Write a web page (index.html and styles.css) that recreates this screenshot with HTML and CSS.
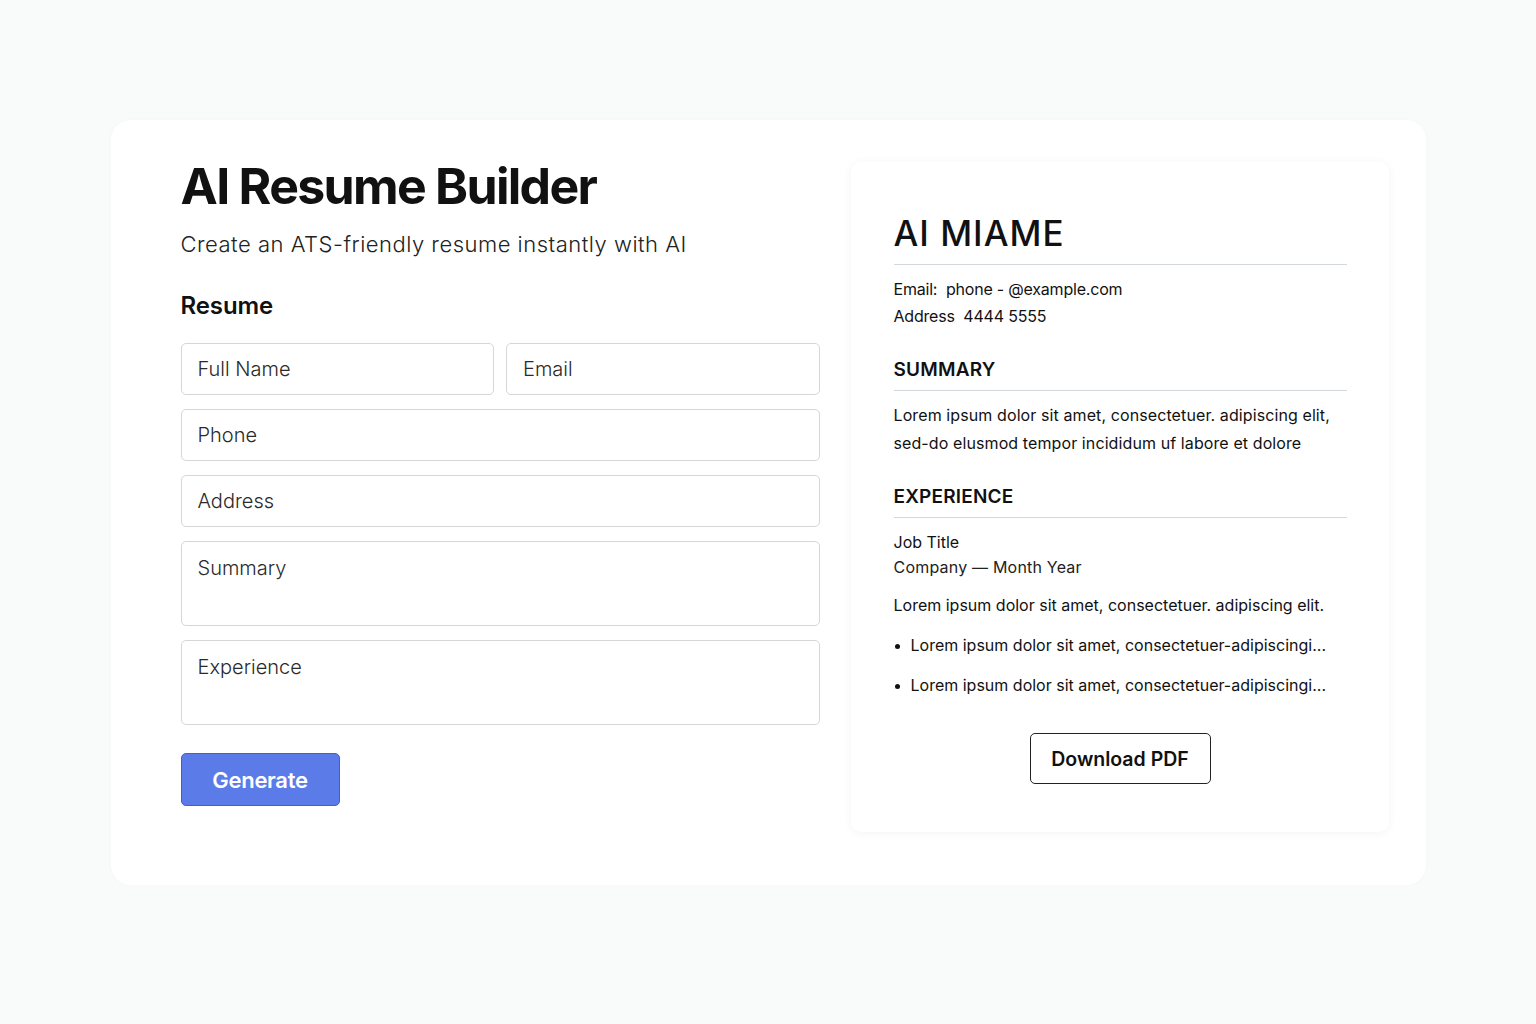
FILE: index.html
```html
<!DOCTYPE html>
<html lang="en">
<head>
    <meta charset="UTF-8">
    <meta name="viewport" content="width=device-width, initial-scale=1.0">
    <title>AI Resume Builder</title>
    <link rel="stylesheet" href="styles.css">
</head>
<body>
    <div class="container">
        <div class="builder">
            <h1>AI Resume Builder</h1>
            <p class="subtitle">Create an ATS-friendly resume instantly with AI</p>
            <h2>Resume</h2>
            <form class="form" onsubmit="return false">
                <div class="row">
                    <input type="text" placeholder="Full Name">
                    <input type="text" placeholder="Email">
                </div>
                <input type="text" placeholder="Phone">
                <input type="text" placeholder="Address">
                <textarea placeholder="Summary"></textarea>
                <textarea placeholder="Experience"></textarea>
            </form>
            <button class="btn">Generate</button>
        </div>

        <div class="preview">
            <h2 class="name">AI MIAME</h2>
            <div class="contact">
                <div>Email:&nbsp; phone - @example.com</div>
                <div>Address&nbsp; 4444 5555</div>
            </div>

            <h3>SUMMARY</h3>
            <p class="summary">Lorem ipsum dolor sit amet, consectetuer. adipiscing elit, sed-do elusmod tempor incididum uf labore et dolore</p>

            <h3>EXPERIENCE</h3>
            <div class="job">
                <div class="job-title">Job Title</div>
                <div class="company">Company — Month Year</div>
            </div>
            <p class="job-text">Lorem ipsum dolor sit amet, consectetuer. adipiscing elit.</p>
            <ul class="bullets">
                <li>Lorem ipsum dolor sit amet, consectetuer-adipiscingi...</li>
                <li>Lorem ipsum dolor sit amet, consectetuer-adipiscingi...</li>
            </ul>

            <div class="download">
                <button class="pdf-btn">Download PDF</button>
            </div>
        </div>
    </div>
</body>
</html>
```

FILE: styles.css
```css
body {
    margin: 0;
    background-color: #f9fafa;
    color: #111;
    font-family: 'Inter', 'Liberation Sans', sans-serif;
}
.container {
    width: 1315px;
    box-sizing: border-box;
    margin: 120px auto 0;
    padding: 36px 37px 53px 70px;
    background-color: #fff;
    border-radius: 20px;
    box-shadow: 0 0 6px rgba(0, 0, 0, 0.02);
    display: grid;
    grid-template-columns: 639px 538px;
    column-gap: 31px;
    align-items: start;
}

/* 左側：入力フォーム */
h1 {
    margin: 0;
    font-size: 50px;
    line-height: 60px;
    font-weight: 700;
    letter-spacing: -1.7px;
    color: #111;
}
.subtitle {
    margin: 13px 0 0;
    font-size: 22px;
    line-height: 30px;
    font-weight: 300;
    letter-spacing: 0.5px;
    color: #222;
}
.builder h2 {
    margin: 32px 0 0;
    font-size: 24px;
    line-height: 30px;
    font-weight: 600;
    letter-spacing: -0.1px;
}
.form {
    margin-top: 22px;
    display: flex;
    flex-direction: column;
    gap: 14px;
}
.row {
    display: grid;
    grid-template-columns: 1fr 1fr;
    gap: 12px;
}
input, textarea {
    box-sizing: border-box;
    width: 100%;
    border: 1.5px solid #d3d7da;
    border-radius: 5px;
    font-family: inherit;
    font-size: 20px;
    font-weight: 300;
    color: #222;
    padding: 0 16px;
    background: #fff;
}
input {
    height: 52px;
}
textarea {
    height: 85px;
    padding-top: 14px;
    line-height: 24px;
    resize: none;
}
input::placeholder, textarea::placeholder {
    color: #2a2a2a;
    opacity: 1;
}
.btn {
    margin-top: 28px;
    width: 159px;
    height: 53px;
    background-color: #5b7be9;
    color: #fff;
    border: 1.5px solid #3d5ee0;
    border-radius: 5px;
    font-family: inherit;
    font-size: 22px;
    font-weight: 600;
    letter-spacing: -0.3px;
    cursor: pointer;
}

/* 右側：プレビュー */
.preview {
    margin-top: 6px;
    height: 670px;
    box-sizing: border-box;
    padding: 50px 42px 0 43px;
    background-color: #fff;
    border-radius: 10px;
    box-shadow: 0 1px 10px rgba(0, 0, 0, 0.05);
}
.name {
    margin: 0;
    padding-bottom: 10px;
    border-bottom: 1px solid #d3d8dc;
    font-size: 35px;
    line-height: 42px;
    font-weight: 500;
    letter-spacing: 1px;
}
.contact {
    margin-top: 11px;
    font-size: 16px;
    line-height: 27px;
    letter-spacing: -0.2px;
}
.preview h3 {
    margin: 28px 0 0;
    padding-bottom: 8px;
    border-bottom: 1px solid #d3d8dc;
    font-size: 19px;
    line-height: 24px;
    font-weight: 600;
    letter-spacing: 0.2px;
}
.summary {
    margin: 10px 0 0;
    font-size: 16px;
    line-height: 28px;
    letter-spacing: 0.1px;
}
.job {
    margin-top: 12px;
    font-size: 16px;
    line-height: 25px;
}
.job-title {
    color: #111;
}
.company {
    color: #222;
    letter-spacing: 0.2px;
}
.job-text {
    margin: 11px 0 0;
    font-size: 16px;
    line-height: 28px;
}
.bullets {
    list-style: none;
    margin: 0;
    padding: 0;
}
.bullets li {
    margin-top: 12px;
    font-size: 16px;
    line-height: 28px;
    display: flex;
    align-items: center;
}
.bullets li::before {
    content: "";
    width: 5px;
    height: 5px;
    border-radius: 50%;
    background-color: #111;
    margin: 2px 11px 0 1px;
}
.download {
    margin-top: 34px;
    display: flex;
    justify-content: center;
}
.pdf-btn {
    width: 181px;
    height: 51px;
    background: #fff;
    border: 1.5px solid #222;
    border-radius: 5px;
    font-family: inherit;
    font-size: 19.5px;
    font-weight: 600;
    color: #111;
    cursor: pointer;
}
```
